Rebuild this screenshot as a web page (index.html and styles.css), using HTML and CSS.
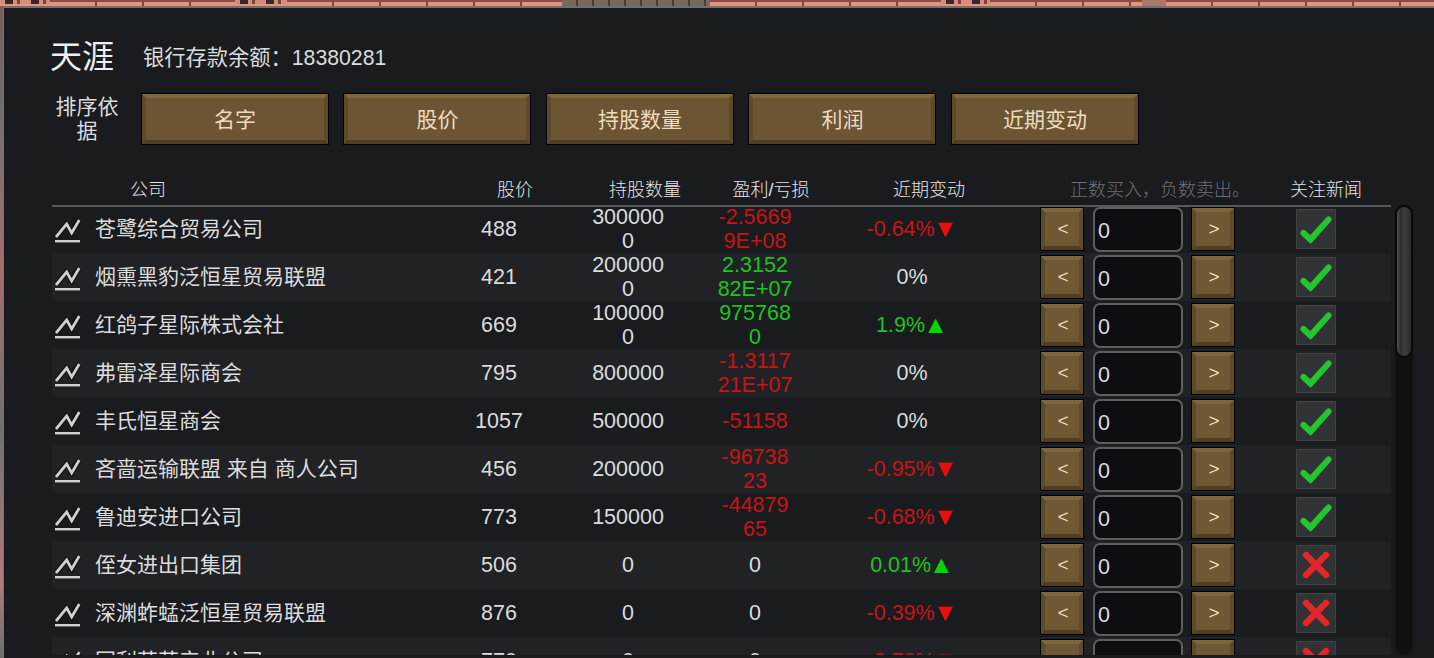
FILE: index.html
```html
<!DOCTYPE html>
<html lang="zh">
<head>
    <meta charset="UTF-8">
    <title>股票</title>
    <link rel="stylesheet" href="styles.css">
</head>
<body>

    <div class="bricks">
        <div class="tile-squares w-50"></div>
        <div class="tile-run w-185"></div>
        <div class="tile-squares w-52"></div>
        <div class="tile-run w-275"></div>
        <div class="tile-rock w-148"></div>
        <div class="tile-run w-231"></div>
        <div class="tile-squares w-49"></div>
        <div class="tile-run w-152"></div>
        <div class="tile-rock w-24"></div>
        <div class="tile-run w-fill"></div>
    </div>

    <div class="stage">
        <div class="side-strip"></div>
        <div class="panel">
            <div class="top-line">
                <div class="title">天涯</div>
                <div class="balance">银行存款余额：18380281</div>
            </div>

            <div class="sort-line">
                <div class="sort-label">排序依据</div>
                <button class="sort-btn">名字</button>
                <button class="sort-btn">股价</button>
                <button class="sort-btn">持股数量</button>
                <button class="sort-btn">利润</button>
                <button class="sort-btn">近期变动</button>
            </div>

            <div class="heads">
                <div class="head-company">公司</div>
                <div>股价</div>
                <div>持股数量</div>
                <div class="head-profit">盈利/亏损</div>
                <div>近期变动</div>
                <div class="head-hint">正数买入，负数卖出。</div>
                <div>关注新闻</div>
            </div>

            <div class="list-area">
                <div class="rows" id="rows"></div>
                <div class="scrollbar"><div class="thumb"></div></div>
            </div>
        </div>
    </div>

    <template id="rowTemplate">
        <div class="row">
            <div class="chart-cell">
                <svg class="chart-icon" viewBox="0 0 28 28" width="28" height="28">
                    <path d="M2 22 L12.7 9 L17.7 18 L25.3 5" fill="none" stroke="#0c0d0f" stroke-width="4.6"/>
                    <path d="M2 22 L12.7 9 L17.7 18 L25.3 5" fill="none" stroke="#cfcfcf" stroke-width="2.8"/>
                    <path d="M1 26.2 H26" fill="none" stroke="#d2d2d2" stroke-width="2.4"/>
                </svg>
            </div>
            <div class="name"></div>
            <div class="price"></div>
            <div class="num-cell"><div class="wrap held"></div></div>
            <div class="num-cell"><div class="wrap profit"></div></div>
            <div class="change"></div>
            <div class="trade">
                <button class="step">&lt;</button>
                <input class="amount" type="text" value="0">
                <button class="step">&gt;</button>
            </div>
            <div class="watch">
                <div class="watch-box"></div>
            </div>
        </div>
    </template>

    <script>
        let companies = [
            { name: "苍鹭综合贸易公司", price: 488, held: "3000000", profit: "-2.56699E+08", change: "-0.64%", arrow: "▼", watch: true },
            { name: "烟熏黑豹泛恒星贸易联盟", price: 421, held: "2000000", profit: "2.315282E+07", change: "0%", arrow: "", watch: true },
            { name: "红鸽子星际株式会社", price: 669, held: "1000000", profit: "9757680", change: "1.9%", arrow: "▲", watch: true },
            { name: "弗雷泽星际商会", price: 795, held: "800000", profit: "-1.311721E+07", change: "0%", arrow: "", watch: true },
            { name: "丰氏恒星商会", price: 1057, held: "500000", profit: "-51158", change: "0%", arrow: "", watch: true },
            { name: "吝啬运输联盟 来自 商人公司", price: 456, held: "200000", profit: "-9673823", change: "-0.95%", arrow: "▼", watch: true },
            { name: "鲁迪安进口公司", price: 773, held: "150000", profit: "-4487965", change: "-0.68%", arrow: "▼", watch: true },
            { name: "侄女进出口集团", price: 506, held: "0", profit: "0", change: "0.01%", arrow: "▲", watch: false },
            { name: "深渊蚱蜢泛恒星贸易联盟", price: 876, held: "0", profit: "0", change: "-0.39%", arrow: "▼", watch: false },
            { name: "国利苏苏产业公司", price: 770, held: "0", profit: "0", change: "-0.73%", arrow: "▼", watch: false }
        ];

        let checkIcon = '<svg viewBox="0 0 40 40" width="40" height="40"><path d="M7.5 24 L14.5 30.5 L32.5 10.5" fill="none" stroke="#22c72e" stroke-width="6.2" stroke-linecap="round"/></svg>';
        let crossIcon = '<svg viewBox="0 0 40 40" width="40" height="40"><path d="M10 10 L30 30 M30 10 L10 30" fill="none" stroke="#e3262a" stroke-width="6.4" stroke-linecap="round"/></svg>';

        function signClass(text) {
            if (text.startsWith("-")) return "loss";
            if (text === "0" || text === "0%") return "";
            return "gain";
        }

        let rows = document.getElementById("rows");
        let template = document.getElementById("rowTemplate");

        companies.forEach((c) => {
            let row = template.content.cloneNode(true);
            row.querySelector(".name").textContent = c.name;
            row.querySelector(".price").textContent = c.price;
            row.querySelector(".held").textContent = c.held;

            let profit = row.querySelector(".profit");
            profit.textContent = c.profit;
            if (signClass(c.profit)) profit.classList.add(signClass(c.profit));

            let change = row.querySelector(".change");
            change.textContent = c.change;
            if (signClass(c.change)) change.classList.add(signClass(c.change));
            if (c.arrow) {
                let arrow = document.createElement("span");
                arrow.className = "arrow";
                arrow.textContent = c.arrow;
                change.appendChild(arrow);
            }

            row.querySelector(".watch-box").innerHTML = c.watch ? checkIcon : crossIcon;
            rows.appendChild(row);
        });
    </script>

</body>
</html>
```

FILE: styles.css
```css
html, body {
    margin: 0;
    padding: 0;
    height: 658px;
    overflow: hidden;
}
body {
    font-family: "Liberation Sans", "Noto Sans CJK SC", sans-serif;
    font-size: 21px;
    color: #dcdcdc;
    background-color: #191b1f;
}

/* map tiles behind the window */
.bricks {
    display: flex;
    height: 6px;
    background-color: #d98a78;
}
.tile-run {
    background:
        linear-gradient(180deg, #8a4c44 0, #8a4c44 2px, transparent 2px),
        repeating-linear-gradient(90deg, #e3937f 0, #e3937f 45px, #84463e 45px, #84463e 47px);
}
.tile-squares {
    background:
        linear-gradient(180deg, transparent 0, transparent 4px, #e3937f 4px),
        repeating-linear-gradient(90deg, #d98a78 0, #d98a78 5px, #3a2622 5px, #3a2622 13px, #d98a78 13px, #d98a78 17px, #7a443c 17px, #7a443c 20px, #d98a78 20px, #d98a78 26px);
}
.tile-rock {
    background: repeating-linear-gradient(90deg, #77695c 0, #77695c 14px, #4a3f38 14px, #4a3f38 16px);
}
.w-24 { width: 24px; background: #a8786a; }
.w-49 { width: 49px; }
.w-50 { width: 50px; }
.w-52 { width: 52px; }
.w-148 { width: 148px; }
.w-152 { width: 152px; }
.w-185 { width: 185px; }
.w-231 { width: 231px; }
.w-275 { width: 275px; }
.w-fill { flex: 1; }

.stage {
    display: flex;
    height: 652px;
}
.side-strip {
    width: 4px;
    background: linear-gradient(180deg, #7a5a58 0, #6d6f72 15%, #a4706c 40%, #6f7072 65%, #b07d7a 88%, #6a6f70 100%);
    border-right: 1px solid #6b7780;
    box-sizing: border-box;
}
.panel {
    flex: 1;
    min-width: 0;
    padding: 0 0 0 48px;
    border-top: 2px solid #6d7278;
    background-color: #191b1f;
}

.top-line {
    display: flex;
    align-items: center;
    height: 36px;
    margin: 31px 0 0 -2px;
}
.title {
    font-size: 32px;
    line-height: 36px;
    color: #eeeeee;
    width: 93px;
}
.balance {
    font-size: 21.25px;
    line-height: 36px;
    padding-top: 1px;
}

.sort-line {
    display: flex;
    align-items: center;
    margin-top: 18px;
    height: 52px;
}
.sort-label {
    width: 64px;
    margin: 0 21.5px 0 3px;
    padding-bottom: 1px;
    line-height: 24px;
    text-align: center;
}
.sort-btn {
    width: 188px;
    height: 52px;
    margin-right: 14.5px;
    padding: 0 0 3px 1px;
    box-sizing: border-box;
    font-family: inherit;
    font-size: 21px;
    color: #ecdcc0;
    background-color: #6b5533;
    border: 5px solid;
    border-color: #806739 #5e4a2a #4f3e22 #5e4a2a;
    outline: 1px solid #000;
    outline-offset: -1px;
}

.heads {
    position: relative;
    z-index: 1;
    display: grid;
    grid-template-columns: 393px 140px 120px 132px 184px 259px 92px;
    height: 38px;
    width: 1339px;
    margin-top: 24px;
    padding-top: 2px;
    box-sizing: border-box;
    align-items: center;
    text-align: center;
    font-size: 18px;
    font-weight: 300;
    color: #e4e4e4;
    border-bottom: 2px solid #56585c;
}
.head-company {
    text-align: left;
    padding-left: 78px;
}
.head-hint {
    text-align: left;
    padding-left: 49px;
    color: #6f7173;
}

.list-area {
    display: flex;
    height: 450px;
    margin-top: -2px;
    overflow: hidden;
}
.rows {
    width: 1339px;
}
.row {
    display: grid;
    grid-template-columns: 43px 350px 108px 150px 104px 210px 243px 112px;
    height: 48px;
    align-items: center;
    background-color: #191b1f;
    font-size: 21.5px;
}
.row:nth-child(even) {
    background-color: #202226;
}

.chart-cell {
    display: flex;
    padding-left: 2px;
}
.chart-icon {
    display: block;
}
.name {
    font-size: 21px;
    padding-bottom: 4px;
}
.price, .change {
    text-align: center;
}
.num-cell {
    text-align: center;
}
.wrap {
    width: 76px;
    margin: 0 auto;
    line-height: 24px;
    word-break: break-all;
}

.gain {
    color: #1ec41e;
}
.loss {
    color: #c81414;
}
.arrow {
    margin-left: -2px;
    font-size: 25px;
    line-height: 24px;
    vertical-align: -1px;
}
.gain .arrow {
    color: #04d604;
}
.loss .arrow {
    color: #e60e0e;
}

.trade {
    display: flex;
    align-items: center;
    gap: 8px;
    padding-left: 23px;
}
.step {
    width: 44px;
    height: 44px;
    padding: 0 0 0 2px;
    box-sizing: border-box;
    font-family: inherit;
    font-size: 19px;
    color: #ecdcc0;
    background-color: #6f5833;
    border: 5px solid;
    border-color: #806739 #5f4b2a #4f3e22 #5f4b2a;
    outline: 1px solid #000;
    outline-offset: -1px;
}
.amount {
    width: 90px;
    height: 45px;
    margin-left: 1px;
    padding: 4px 0 0 3px;
    box-sizing: border-box;
    font-family: inherit;
    font-size: 21.5px;
    color: #dcdcdc;
    background-color: #0d0e11;
    border: 2px solid #5c5f62;
    border-radius: 7px;
    outline: none;
}

.watch {
    display: flex;
    justify-content: center;
}
.watch-box {
    width: 40px;
    height: 40px;
    box-sizing: border-box;
    background-color: #303234;
    border: 1px solid #3f4143;
}
.watch-box svg {
    display: block;
    margin: -1px;
}

.scrollbar {
    width: 18px;
    height: 450px;
    margin-left: 4px;
    background-color: #101113;
    border-radius: 9px;
}
.thumb {
    width: 18px;
    height: 153px;
    box-sizing: border-box;
    background: linear-gradient(90deg, #4c4e50 0, #2e3032 25%, #3c3e41 55%, #2a2c2e 100%);
    border: 2px solid #08090a;
    border-radius: 9px;
}
```
